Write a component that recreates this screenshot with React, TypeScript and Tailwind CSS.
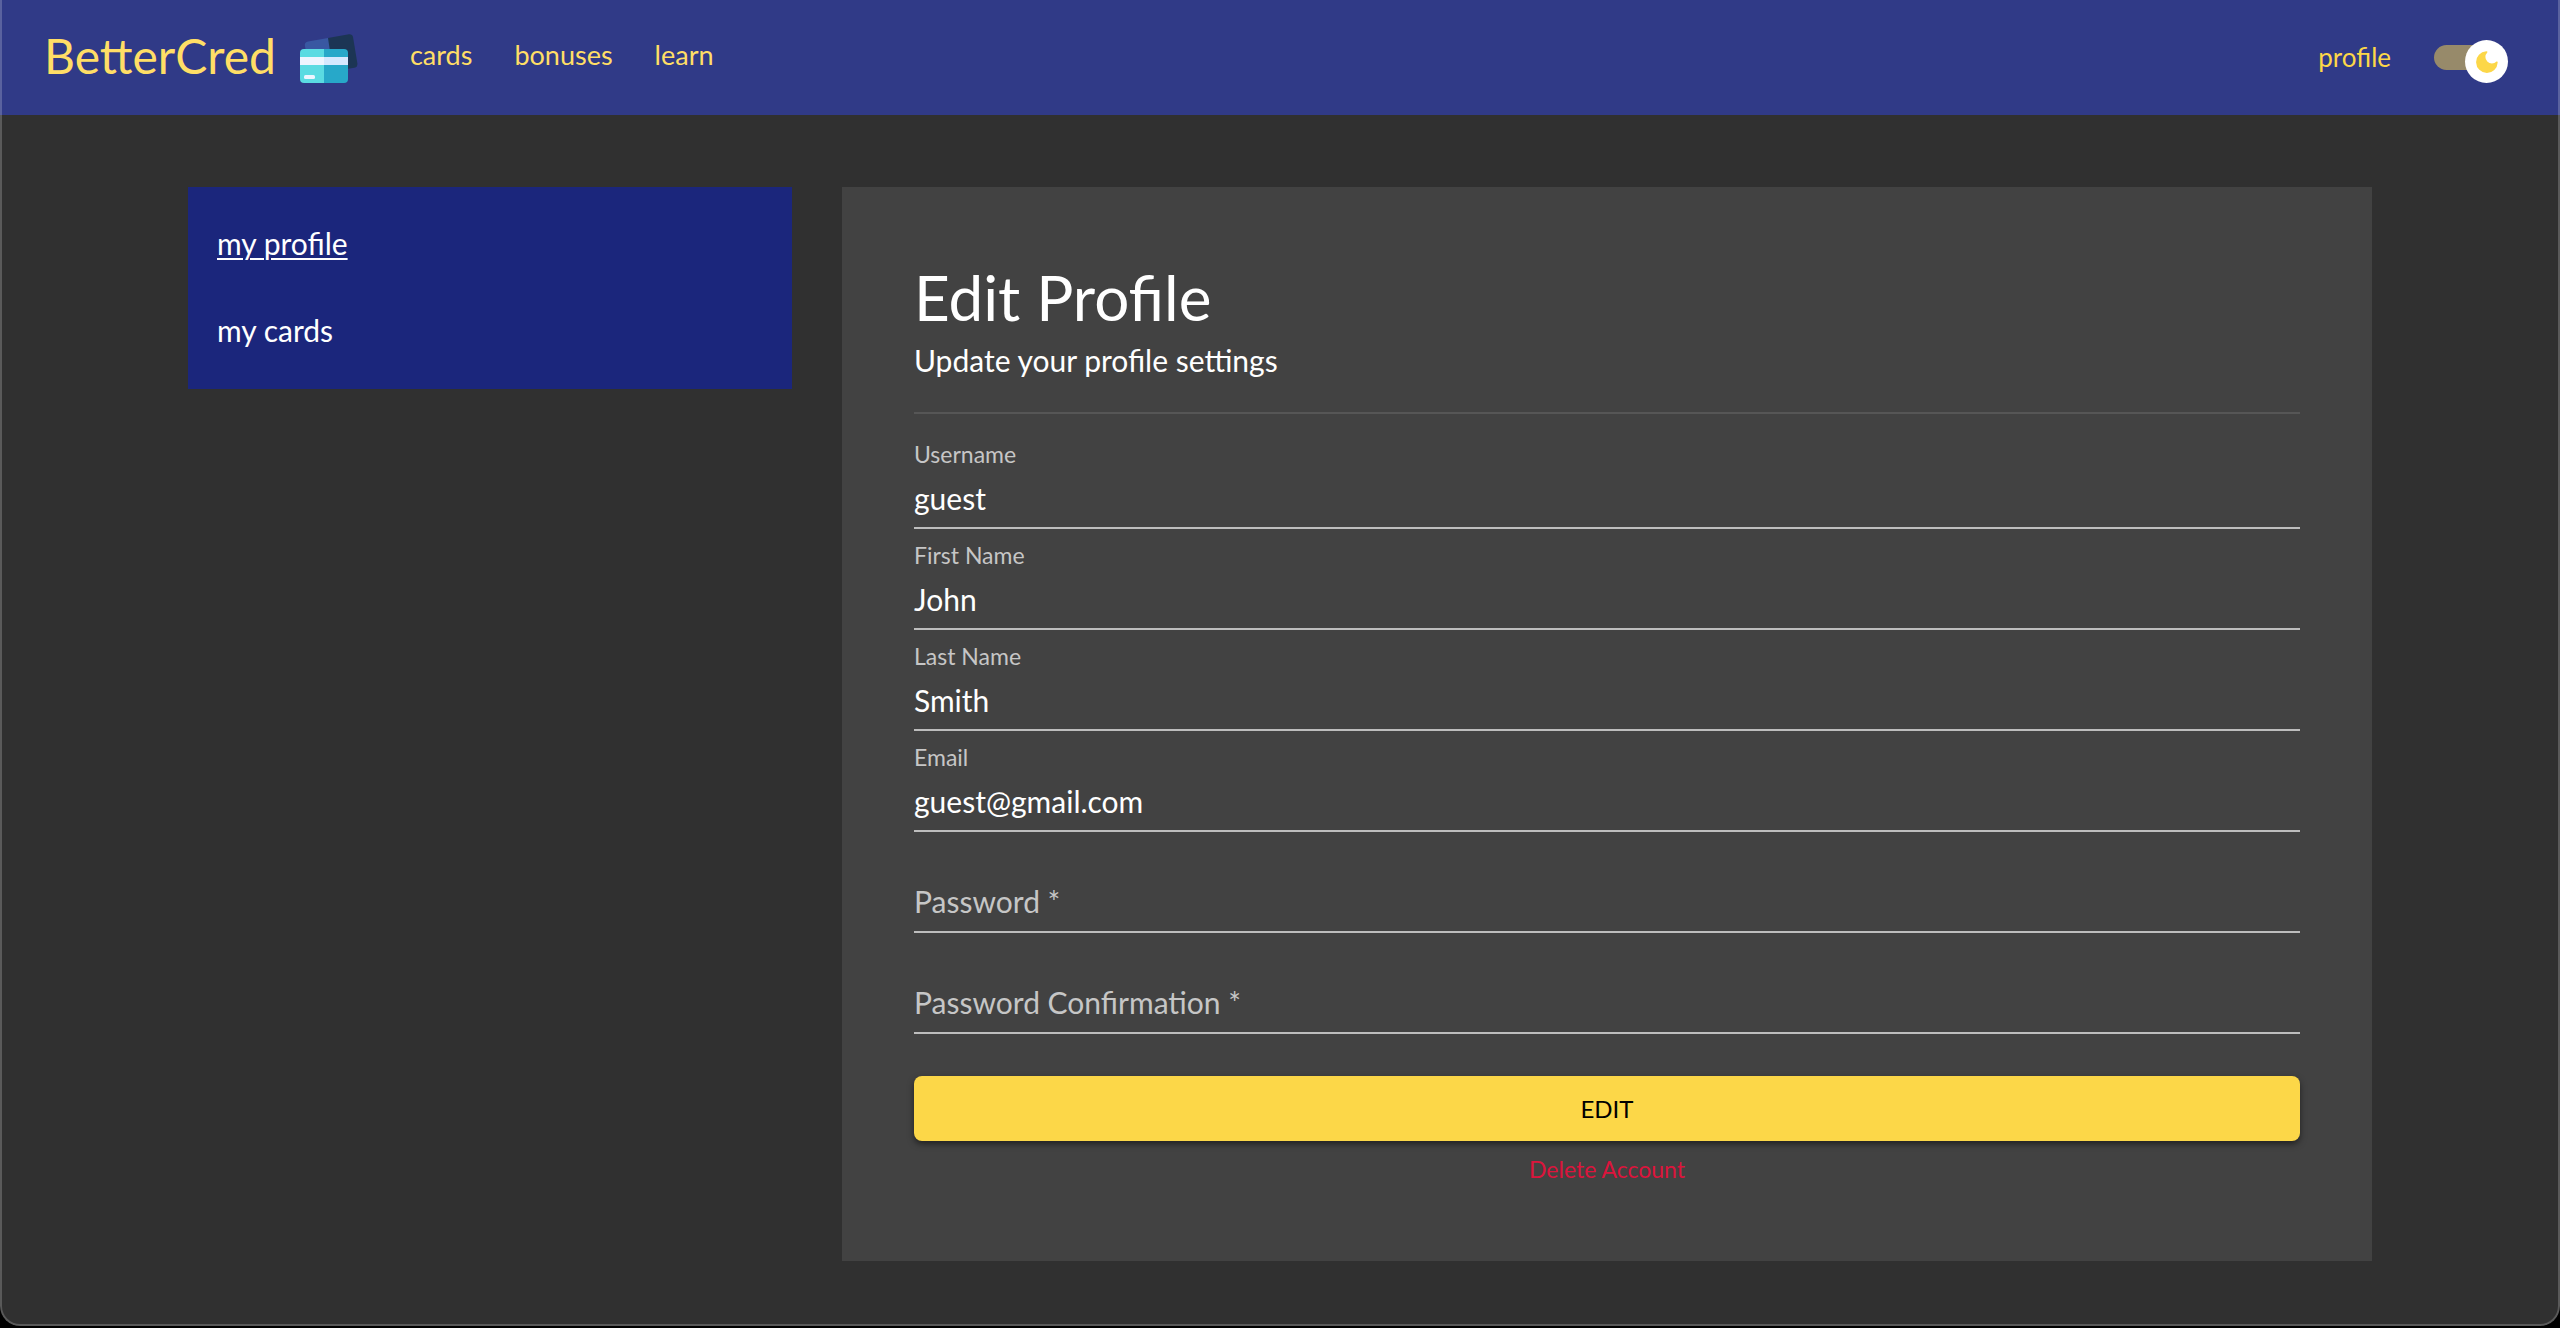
import { useId, useState } from "react";

function CardsLogo() {
  return (
    <svg viewBox="0 0 58 50" className="mt-1.5 ml-6 h-[50px] w-[58px] shrink-0" aria-hidden="true">
      <path d="M28 4 L49 0.3 Q52.300 0 53 3 L57.400 29.500 Q57.700 33 54.500 33.800 L40 36 L28 28 Z" fill="#1c3554" />
      <path d="M8 7.500 L28 4 L31 24 L7 24 L4.800 11 Q4.800 8 8 7.500 Z" fill="#3958a2" />
      <path d="M4 15 H24 V49 H4 Q0 49 0 45 V19 Q0 15 4 15 Z" fill="#5adbe2" />
      <path d="M24 15 H44 Q48 15 48 19 V45 Q48 49 44 49 H24 Z" fill="#27a8c9" />
      <rect x="0" y="23" width="24" height="8" fill="#edf5ff" />
      <rect x="24" y="23" width="24" height="8" fill="#d5e8fe" />
      <rect x="4" y="41" width="11" height="4" rx="1.500" fill="#edf5ff" />
    </svg>
  );
}

function ThemeSwitch() {
  const [dark, setDark] = useState(true);
  return (
    <label className="relative flex w-[74px] cursor-pointer items-center">
      <input
        type="checkbox"
        role="switch"
        aria-label="Dark theme"
        checked={dark}
        onChange={(e) => setDark(e.target.checked)}
        className="h-[25px] w-[62px] cursor-pointer appearance-none rounded-full bg-[#978a6a]"
      />
      <span
        className={
          dark
            ? "absolute -top-[5px] left-[31px] flex size-[43px] items-center justify-center rounded-full bg-white"
            : "absolute -top-[5px] left-0 flex size-[43px] items-center justify-center rounded-full bg-white"
        }
      >
        <svg viewBox="0 0 22 22" className="size-[22px]" aria-hidden="true">
          <path
            d="M10.200 0.300 Q11.900 0.200 11.300 1.400 A6.500 6.500 0 0 0 20.500 10.600 Q21.800 10.100 21.700 11.600 A10.800 10.800 0 1 1 10.200 0.300 Z"
            fill="#fcd748"
          />
        </svg>
      </span>
    </label>
  );
}

function Header() {
  return (
    <header className="flex h-[115px] items-center bg-[#303a87] pr-[52px] pb-1 pl-11 text-[#ffde66]">
      <a href="#home" className="flex items-center text-5xl">
        BetterCred
        <CardsLogo />
      </a>
      <nav aria-label="Main" className="ml-[52px] flex gap-[42px] text-[27px]">
        <a href="#cards">cards</a>
        <a href="#bonuses">bonuses</a>
        <a href="#learn">learn</a>
      </nav>
      <div className="ml-auto flex items-center gap-[43px] pt-1 text-[26px] text-[#fcd748]">
        <a href="#profile">profile</a>
        <ThemeSwitch />
      </div>
    </header>
  );
}

type FieldProps = { label: string; type?: string; value?: string };

function Field({ label, type = "text", value }: FieldProps) {
  const id = useId();
  return (
    <div className="border-b-2 border-[#bdbdbd] pt-[14px] pb-[10px]">
      <label htmlFor={id} className="block text-[23px] leading-6 text-[#c6c6c6]">
        {label}
      </label>
      <input
        id={id}
        type={type}
        defaultValue={value}
        className="mt-[13px] block h-[38px] w-full bg-transparent text-3xl leading-[38px] text-white outline-none"
      />
    </div>
  );
}

function PasswordField({ label }: FieldProps) {
  const id = useId();
  return (
    <div className="grid border-b-2 border-[#bdbdbd] pt-[50px] pb-[11px]">
      <label htmlFor={id} className="col-start-1 row-start-1 text-3xl leading-[38px] text-[#c6c6c6]">
        {label} *
      </label>
      <input
        id={id}
        type="password"
        required
        className="col-start-1 row-start-1 h-[38px] w-full bg-transparent text-3xl text-white outline-none"
      />
    </div>
  );
}

export default function App() {
  return (
    <div className="flex min-h-screen flex-col bg-black pb-0.5 font-['Lato',sans-serif]">
      <div className="relative grow overflow-hidden rounded-b-[20px] bg-[#303030]">
        <Header />
        <main className="grid grid-cols-[604fr_1530fr] items-start gap-[50px] px-[188px] pt-[72px] pb-16">
          <nav
            aria-label="Account"
            className="flex flex-col items-start gap-[43px] bg-[#1b267c] pt-[34px] pb-[37px] pl-[29px] text-3xl leading-[44px] text-white"
          >
            <a href="#my-profile" aria-current="page" className="underline decoration-2 underline-offset-[3px]">
              my profile
            </a>
            <a href="#my-cards">my cards</a>
          </nav>
          <section className="bg-[#424242] px-[72px] pt-[74px] pb-[76px] text-white">
            <h1 className="text-[62px] leading-[72px]">Edit Profile</h1>
            <p className="mt-[7px] text-3xl leading-10">Update your profile settings</p>
            <hr className="mt-8 mb-[14px] border-t-2 border-[#565656]" />
            <form onSubmit={(e) => e.preventDefault()}>
              <Field label="Username" value="guest" />
              <Field label="First Name" value="John" />
              <Field label="Last Name" value="Smith" />
              <Field label="Email" type="email" value="guest@gmail.com" />
              <PasswordField label="Password" />
              <PasswordField label="Password Confirmation" />
              <button
                type="submit"
                className="mt-[42px] block h-[65px] w-full rounded-lg bg-[#fcd748] text-2xl text-black shadow-[0_3px_6px_rgba(0,0,0,0.5)]"
              >
                EDIT
              </button>
              <button type="button" className="mx-auto mt-3 block text-[23px] leading-8 text-[#dc143c]">
                Delete Account
              </button>
            </form>
          </section>
        </main>
        <div className="pointer-events-none absolute inset-0 rounded-b-[20px] border-x-2 border-b-2 border-white/20" />
      </div>
    </div>
  );
}
